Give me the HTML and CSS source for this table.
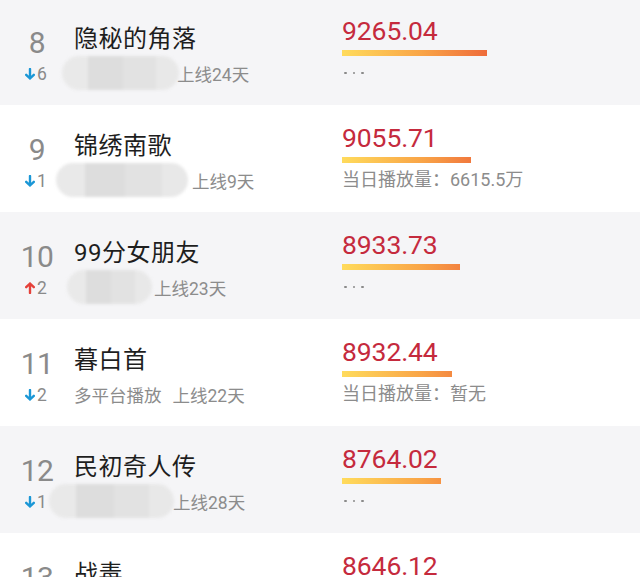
FILE: index.html
```html
<!DOCTYPE html>
<html lang="zh-CN">
<head>
<meta charset="utf-8">
<title>榜单</title>
<link rel="stylesheet" href="styles.css">
</head>
<body>
<div class="list">

  <div class="row gray">
    <div class="rank">
      <div class="rank-num">8</div>
      <div class="change"><svg class="arrow down" viewBox="0 0 10 12"><path d="M5 1V10.5M1.2 6.8L5 10.5L8.8 6.8"/></svg><span>6</span></div>
    </div>
    <div class="info">
      <div class="title">隐秘的角落</div>
      <div class="sub"><span class="blur b8"></span><span class="days">上线24天</span></div>
    </div>
    <div class="score">
      <div class="value">9265.04</div>
      <div class="bar" style="width:145px"></div>
      <div class="dots"><i></i><i></i><i></i></div>
    </div>
  </div>

  <div class="row">
    <div class="rank">
      <div class="rank-num">9</div>
      <div class="change"><svg class="arrow down" viewBox="0 0 10 12"><path d="M5 1V10.5M1.2 6.8L5 10.5L8.8 6.8"/></svg><span>1</span></div>
    </div>
    <div class="info">
      <div class="title">锦绣南歌</div>
      <div class="sub"><span class="blur b9"></span><span class="days">上线9天</span></div>
    </div>
    <div class="score">
      <div class="value">9055.71</div>
      <div class="bar" style="width:129px"></div>
      <div class="daily">当日播放量：6615.5万</div>
    </div>
  </div>

  <div class="row gray">
    <div class="rank">
      <div class="rank-num">10</div>
      <div class="change"><svg class="arrow up" viewBox="0 0 10 12"><path d="M5 11V1.5M1.2 5.2L5 1.5L8.8 5.2"/></svg><span>2</span></div>
    </div>
    <div class="info">
      <div class="title">99分女朋友</div>
      <div class="sub"><span class="blur b10"></span><span class="days">上线23天</span></div>
    </div>
    <div class="score">
      <div class="value">8933.73</div>
      <div class="bar" style="width:118px"></div>
      <div class="dots"><i></i><i></i><i></i></div>
    </div>
  </div>

  <div class="row">
    <div class="rank">
      <div class="rank-num">11</div>
      <div class="change"><svg class="arrow down" viewBox="0 0 10 12"><path d="M5 1V10.5M1.2 6.8L5 10.5L8.8 6.8"/></svg><span>2</span></div>
    </div>
    <div class="info">
      <div class="title">暮白首</div>
      <div class="sub plain"><span class="platform">多平台播放</span><span class="days">上线22天</span></div>
    </div>
    <div class="score">
      <div class="value">8932.44</div>
      <div class="bar" style="width:110px"></div>
      <div class="daily">当日播放量：暂无</div>
    </div>
  </div>

  <div class="row gray">
    <div class="rank">
      <div class="rank-num">12</div>
      <div class="change"><svg class="arrow down" viewBox="0 0 10 12"><path d="M5 1V10.5M1.2 6.8L5 10.5L8.8 6.8"/></svg><span>1</span></div>
    </div>
    <div class="info">
      <div class="title">民初奇人传</div>
      <div class="sub"><span class="blur b12"></span><span class="days">上线28天</span></div>
    </div>
    <div class="score">
      <div class="value">8764.02</div>
      <div class="bar" style="width:99px"></div>
      <div class="dots"><i></i><i></i><i></i></div>
    </div>
  </div>

  <div class="row">
    <div class="rank">
      <div class="rank-num">13</div>
      <div class="change"><svg class="arrow down" viewBox="0 0 10 12"><path d="M5 1V10.5M1.2 6.8L5 10.5L8.8 6.8"/></svg><span>1</span></div>
    </div>
    <div class="info">
      <div class="title">战毒</div>
      <div class="sub"><span class="blur b12"></span><span class="days">上线20天</span></div>
    </div>
    <div class="score">
      <div class="value">8646.12</div>
      <div class="bar" style="width:92px"></div>
      <div class="dots"><i></i><i></i><i></i></div>
    </div>
  </div>

</div>
</body>
</html>
```

FILE: styles.css
```css
* { box-sizing: border-box; }
html, body {
  margin: 0;
  padding: 0;
  background: #ffffff;
  overflow: hidden;
}
body {
  font-family: Roboto, "Noto Sans CJK SC", "Noto Sans", sans-serif;
  color: #222222;
}
.list {
  margin-top: -2px;
  display: flex;
  flex-direction: column;
}
.row {
  height: 107px;
  display: grid;
  grid-template-columns: 74px 268px 1fr;
  align-items: start;
  background: #ffffff;
}
.row.gray { background: #f5f5f7; }

/* rank column */
.rank {
  padding-top: 28px;
  display: flex;
  flex-direction: column;
  align-items: center;
}
.rank-num {
  font-size: 30px;
  line-height: 34px;
  color: #8a8a8a;
  letter-spacing: -0.5px;
}
.change {
  margin-top: 3px;
  height: 22px;
  display: flex;
  align-items: center;
  gap: 2px;
  font-size: 17.5px;
  color: #8a8a8a;
  margin-left: -2px;
}
.arrow {
  width: 10px;
  height: 12px;
  fill: none;
  stroke-width: 2.4;
  stroke-linecap: round;
  stroke-linejoin: round;
}
.arrow.down { stroke: #1b97d6; }
.arrow.up { stroke: #e5413a; }

/* info column */
.info {
  padding-top: 26px;
  display: flex;
  flex-direction: column;
}
.title {
  font-size: 24px;
  line-height: 30px;
  letter-spacing: 0.5px;
  color: #1e1e1e;
}
.sub {
  margin-top: 2px;
  height: 34px;
  display: flex;
  align-items: center;
  font-size: 17.5px;
  color: #8c8c8c;
  white-space: nowrap;
}
.blur {
  display: block;
  height: 34px;
  border-radius: 17px;
  background: linear-gradient(90deg, #e9e9e9 0 22%, #dddddd 22% 52%, #e2e2e2 52% 80%, #e8e8e8 80%);
  filter: blur(1.5px);
  flex: none;
}
.blur.b8 { width: 117px; margin-left: -12px; margin-right: -2px; }
.blur.b9 { width: 132px; margin-left: -18px; margin-right: 4px; }
.blur.b10 { width: 85px; margin-left: -7px; margin-right: 2px; }
.blur.b12 { width: 125px; margin-left: -25px; margin-right: -1px; }
.platform { margin-right: 11px; }

/* score column */
.score {
  padding-top: 18px;
  display: flex;
  flex-direction: column;
  align-items: flex-start;
}
.value {
  font-size: 26.5px;
  line-height: 30px;
  color: #c52a3d;
  letter-spacing: -0.1px;
}
.bar {
  margin-top: 4px;
  height: 6px;
  background: linear-gradient(90deg, #ffdb5c 0, #f9a447 55%, #ee6a3a 100%);
  background-size: 146px 100%;
  background-repeat: no-repeat;
}
.daily {
  margin-top: 6px;
  font-size: 18px;
  line-height: 22px;
  color: #8c8c8c;
  white-space: nowrap;
}
.dots {
  margin-top: 6px;
  height: 22px;
  display: flex;
  align-items: center;
  gap: 6px;
  padding-left: 2px;
}
.dots i {
  display: block;
  width: 2.5px;
  height: 2.5px;
  border-radius: 50%;
  background: #8a8a8a;
}
```
